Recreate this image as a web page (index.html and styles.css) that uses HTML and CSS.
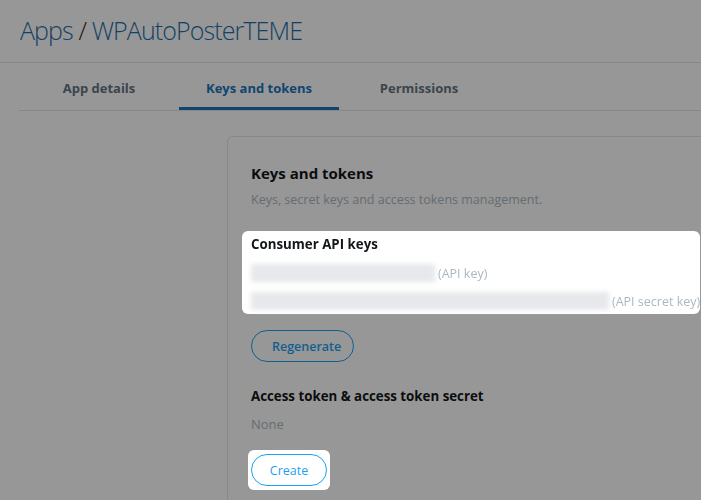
FILE: index.html
```html
<!DOCTYPE html>
<html lang="en">
<head>
  <meta charset="UTF-8" />
  <title>Apps / WPAutoPosterTEME</title>
  <meta name="viewport" content="width=device-width, initial-scale=1" />
  <link rel="stylesheet" href="styles.css">
</head>
<body>
  <header class="page-header">
    <h1><span class="crumb">Apps</span> <span class="slash">/</span> <span class="crumb">WPAutoPosterTEME</span></h1>
  </header>

  <nav class="tabs">
    <a class="tab">App details</a>
    <a class="tab active">Keys and tokens</a>
    <a class="tab">Permissions</a>
  </nav>

  <main class="layout">
    <aside class="sidebar"></aside>

    <section class="card">
      <h2>Keys and tokens</h2>
      <p class="subtitle">Keys, secret keys and access tokens management.</p>

      <div class="spotlight keys">
        <h3>Consumer API keys</h3>
        <div class="key-row">
          <span class="secret" style="width: 184px"></span>
          <span class="hint">(API key)</span>
        </div>
        <div class="key-row">
          <span class="secret" style="width: 358px"></span>
          <span class="hint">(API secret key)</span>
        </div>
      </div>

      <button class="btn">Regenerate</button>

      <h3 class="access-title">Access token &amp; access token secret</h3>
      <p class="none">None</p>

      <div class="spotlight create-wrap">
        <button class="btn">Create</button>
      </div>
    </section>
  </main>

  <div class="overlay"></div>
</body>
</html>
```

FILE: styles.css
```css
body {
  margin: 0;
  font-family: "Open Sans", "Noto Sans", sans-serif;
  background: #fff;
  color: #14171a;
  overflow: hidden;
}
.page-header {
  height: 63px;
  border-bottom: 1px solid #e1e8ed;
  padding-left: 20px;
  box-sizing: border-box;
}
.page-header h1 {
  margin: 0;
  padding-top: 12px;
  font-size: 25px;
  font-weight: 300;
  line-height: 36px;
  letter-spacing: -0.9px;
}
.crumb {
  color: #1f6faa;
}
.slash {
  color: #3a2a1a;
}
/* Tabs */
.tabs {
  display: flex;
  margin-left: 19px;
  border-bottom: 1px solid #e1e8ed;
}
.tab {
  width: 160px;
  height: 47px;
  box-sizing: border-box;
  display: flex;
  align-items: center;
  justify-content: center;
  font-size: 13px;
  font-weight: 700;
  color: #66757f;
  padding-top: 3px;
}
.tab.active {
  color: #1b75bb;
  border-bottom: 3px solid #1b75bb;
  padding-top: 6px;
}
/* Content */
.layout {
  display: flex;
  margin-top: 25px;
}
.sidebar {
  width: 227px;
  flex-shrink: 0;
}
.card {
  flex: 1;
  min-width: 0;
  border: 1px solid #e1e8ed;
  border-right: 0;
  border-radius: 6px 0 0 6px;
  padding: 25px 0 25px 23px;
}
.card h2 {
  margin: 0;
  font-size: 15px;
  line-height: 22px;
  font-weight: 700;
}
.subtitle {
  margin: 7px 0 0;
  font-size: 12.5px;
  line-height: 18px;
  color: #aab8c2;
}
.spotlight {
  position: relative;
  z-index: 2;
  background: #fff;
  border-radius: 6px;
}
.keys {
  margin: 22px 0 0 -9px;
  padding: 3px 9px 0;
  width: 440px;
  height: 80px;
}
.keys h3, .access-title {
  margin: 0;
  font-size: 13.3px;
  line-height: 20px;
  font-weight: 700;
}
.key-row {
  display: flex;
  align-items: center;
  height: 28px;
}
.key-row:first-of-type {
  margin-top: 5px;
}
.secret {
  display: block;
  flex-shrink: 0;
  height: 18px;
  background: #e6e8eb;
  filter: blur(2.5px);
  margin-right: 3px;
}
.hint {
  font-size: 12.5px;
  color: #aab8c2;
  white-space: nowrap;
}
.btn {
  display: block;
  height: 32px;
  padding: 0 20px;
  border: 1px solid #1da1f2;
  border-radius: 16px;
  background: #fff;
  color: #1da1f2;
  font-family: inherit;
  font-size: 12.5px;
  font-weight: 600;
  cursor: pointer;
}
.keys + .btn {
  margin-top: 16px;
  width: 103px;
}
.access-title {
  margin-top: 24px;
}
.none {
  margin: 8px 0 0;
  font-size: 13px;
  line-height: 20px;
  color: #aab8c2;
}
.create-wrap {
  display: inline-block;
  margin: 16px 0 0 -3px;
  padding: 4px 3px;
}
.create-wrap .btn {
  width: 76px;
  padding: 0;
  font-weight: 400;
}
.overlay {
  position: fixed;
  inset: 0;
  background: rgba(0, 0, 0, 0.407);
  z-index: 1;
}
```
